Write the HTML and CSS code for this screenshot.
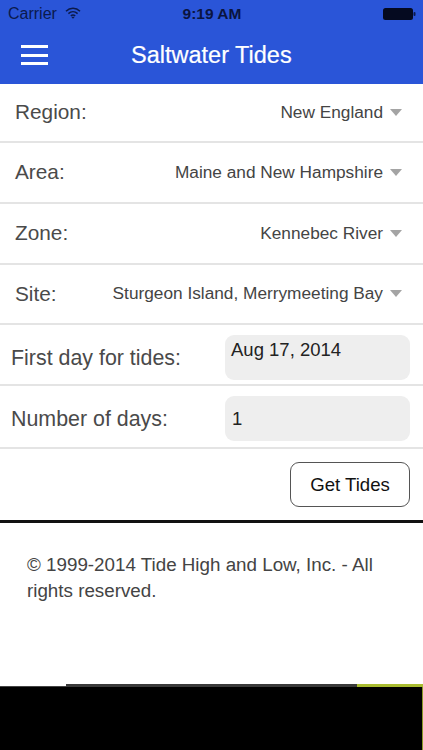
FILE: index.html
```html
<!DOCTYPE html>
<html lang="en">
<head>
<meta charset="utf-8">
<title>Saltwater Tides</title>
<link rel="stylesheet" href="styles.css">
</head>
<body>
<header class="top">
  <div class="status">
    <div class="status-left">
      <span>Carrier</span>
      <svg class="wifi" viewBox="0 0 16 12" width="16" height="12"><path d="M1 4.2C5 .4 11 .4 15 4.2M3.4 6.6c2.7-2.4 6.5-2.4 9.2 0M5.8 8.9c1.3-1 3.1-1 4.4 0" fill="none" stroke="#0c1a4a" stroke-width="1.5"/><path d="M8 11.8 6.5 10.2c.9-.6 2.1-.6 3 0z" fill="#0c1a4a"/></svg>
    </div>
    <span class="time">9:19 AM</span>
    <svg class="battery" viewBox="0 0 33 12" width="33" height="12"><rect x="0" y="0" width="30" height="12" rx="2.5" fill="#050a20"/><rect x="30.5" y="4" width="2" height="4" rx="1" fill="#0c1a4a"/></svg>
  </div>
  <div class="nav">
    <button class="burger" aria-label="Menu"><span></span><span></span><span></span></button>
    <h1>Saltwater Tides</h1>
  </div>
</header>
<main>
  <div class="select-row row-a"><label>Region:</label><div class="value">New England<i class="caret"></i></div></div>
  <div class="select-row row-b"><label>Area:</label><div class="value">Maine and New Hampshire<i class="caret"></i></div></div>
  <div class="select-row row-b"><label>Zone:</label><div class="value">Kennebec River<i class="caret"></i></div></div>
  <div class="select-row row-c"><label>Site:</label><div class="value">Sturgeon Island, Merrymeeting Bay<i class="caret"></i></div></div>
  <div class="input-row row-d"><label>First day for tides:</label><div class="field field-top">Aug 17, 2014</div></div>
  <div class="input-row row-e"><label>Number of days:</label><div class="field">1</div></div>
  <div class="actions"><button class="get">Get Tides</button></div>
</main>
<footer class="copy">
  <p>© 1999-2014 Tide High and Low, Inc. - All rights reserved.</p>
</footer>
<div class="ad">
  <div class="ad-edge"><span class="edge-a"></span><span class="edge-b"></span><span class="edge-c"></span></div>
  <div class="ad-body"></div>
</div>
</body>
</html>
```

FILE: styles.css
```css
* { box-sizing: border-box; }
html, body { margin: 0; padding: 0; }
body {
  width: 423px;
  height: 750px;
  overflow: hidden;
  background: #fff;
  font-family: "Liberation Sans", Arial, sans-serif;
  display: flex;
  flex-direction: column;
}
.top { height: 84px; background: #2a55d8; flex: none; }
.status {
  height: 28px;
  padding: 0 7px 0 8px;
  display: grid;
  grid-template-columns: 1fr auto 1fr;
  align-items: center;
  font-size: 16px;
  color: #0b1a4d;
}
.status-left { display: flex; align-items: center; gap: 8px; }
.wifi { margin-top: -3px; }
.time { font-weight: 700; font-size: 15.5px; color: #0a1440; }
.battery { justify-self: end; }
.nav {
  height: 56px;
  display: flex;
  align-items: center;
  padding: 0 0 2px 21px;
}
.burger {
  width: 27px;
  height: 20px;
  padding: 0;
  background: none;
  border: 0;
  display: flex;
  flex-direction: column;
  justify-content: space-between;
}
.burger span { display: block; height: 3px; background: #fff; }
.nav h1 {
  margin: 0 0 0 83px;
  font-size: 23.5px;
  font-weight: 400;
  color: #fff;
  -webkit-text-stroke: 0.2px #fff;
  white-space: nowrap;
}
main { flex: none; }
.select-row, .input-row {
  display: flex;
  align-items: center;
  justify-content: space-between;
  border-bottom: 2px solid #e4e4e4;
  color: #4a4a4a;
}
.select-row { padding: 0 21px 1px 15px; }
.select-row label { font-size: 20.8px; }
.row-a { height: 59px; }
.row-b { height: 61px; }
.row-c { height: 60px; }
.row-d { height: 61px; padding-top: 6px; }
.row-e { height: 63px; padding-top: 4px; }
.value {
  display: flex;
  align-items: center;
  font-size: 17.25px;
  color: #444;
}
.caret {
  margin-left: 7px;
  width: 0;
  height: 0;
  border-left: 6.5px solid transparent;
  border-right: 6.5px solid transparent;
  border-top: 7px solid #a4a4a4;
}
.input-row { padding-left: 11px; padding-right: 13px; }
.input-row label { font-size: 21.4px; padding-top: 2px; }
.field {
  width: 185px;
  height: 45px;
  background: #eee;
  border-radius: 9px;
  padding: 1px 6px 0 7px;
  display: flex;
  align-items: center;
  font-size: 18.5px;
  color: #222;
}
.field-top { align-items: flex-start; padding: 4px 6px 0; }
.actions {
  height: 74px;
  display: flex;
  justify-content: flex-end;
  align-items: flex-start;
  padding: 13px 13px 0 0;
  border-bottom: 3px solid #111;
}
.get {
  width: 120px;
  height: 45px;
  background: #fff;
  border: 1px solid #555;
  border-radius: 9px;
  font: 400 18.6px "Liberation Sans", Arial, sans-serif;
  color: #111;
  padding: 1px 0 0;
}
.copy { flex: 1; padding: 29px 27px 0; }
.copy p {
  margin: 0;
  font-size: 18.8px;
  line-height: 26px;
  color: #444;
}
.ad { flex: none; height: 66px; display: flex; flex-direction: column; background: #000; }
.ad-edge { height: 3px; display: flex; align-items: flex-end; background: #fff; }
.edge-a { width: 66px; height: 1px; background: #444; }
.edge-b { width: 291px; height: 3px; background: #3a3a3a; }
.edge-c { width: 66px; height: 3px; background: #a9bc30; }
.ad-body { flex: 1; background: #000; border-right: 1px solid #8a9a28; }
```
